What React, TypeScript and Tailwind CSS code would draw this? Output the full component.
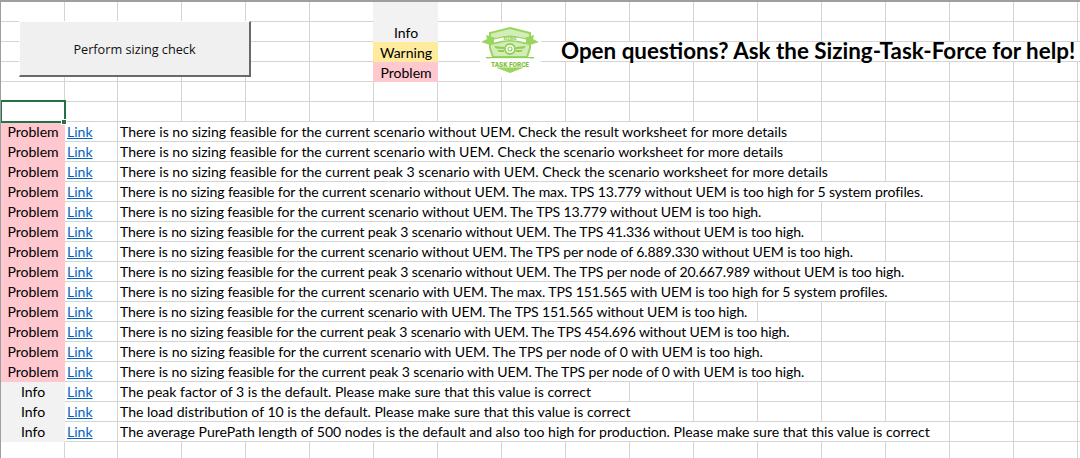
const COLUMNS = 'grid grid-cols-[64px_53px_repeat(16,64px)] grid-rows-[20px]';
const TOTAL_COLUMNS = 18;

interface Message {
  level: 'Problem' | 'Info';
  text: string;
  span: string;
  width: number;
  fit?: string;
}

// fit: Lato runs a little wider than the sheet font on some sentences
const messages: Message[] = [
  { level: 'Problem', span: 'col-span-11', width: 11, text: 'There is no sizing feasible for the current scenario without UEM. Check the result worksheet for more details' },
  { level: 'Problem', span: 'col-span-11', width: 11, text: 'There is no sizing feasible for the current scenario with UEM. Check the scenario worksheet for more details' },
  { level: 'Problem', span: 'col-span-12', width: 12, text: 'There is no sizing feasible for the current peak 3 scenario with UEM. Check the scenario worksheet for more details' },
  { level: 'Problem', span: 'col-span-13', width: 13, fit: 'tracking-[-0.09px]', text: 'There is no sizing feasible for the current scenario without UEM. The max. TPS 13.779 without UEM is too high for 5 system profiles.' },
  { level: 'Problem', span: 'col-span-11', width: 11, fit: 'tracking-[-0.12px]', text: 'There is no sizing feasible for the current scenario without UEM. The TPS 13.779 without UEM is too high.' },
  { level: 'Problem', span: 'col-span-11', width: 11, fit: 'tracking-[-0.13px]', text: 'There is no sizing feasible for the current peak 3 scenario without UEM. The TPS 41.336 without UEM is too high.' },
  { level: 'Problem', span: 'col-span-12', width: 12, fit: 'tracking-[-0.125px]', text: 'There is no sizing feasible for the current scenario without UEM. The TPS per node of 6.889.330 without UEM is too high.' },
  { level: 'Problem', span: 'col-span-13', width: 13, fit: 'tracking-[-0.13px]', text: 'There is no sizing feasible for the current peak 3 scenario without UEM. The TPS per node of 20.667.989 without UEM is too high.' },
  { level: 'Problem', span: 'col-span-13', width: 13, fit: 'tracking-[-0.11px]', text: 'There is no sizing feasible for the current scenario with UEM. The max. TPS 151.565 with UEM is too high for 5 system profiles.' },
  { level: 'Problem', span: 'col-span-10', width: 10, fit: 'tracking-[-0.135px]', text: 'There is no sizing feasible for the current scenario with UEM. The TPS 151.565 without UEM is too high.' },
  { level: 'Problem', span: 'col-span-11', width: 11, fit: 'tracking-[-0.15px]', text: 'There is no sizing feasible for the current peak 3 scenario with UEM. The TPS 454.696 without UEM is too high.' },
  { level: 'Problem', span: 'col-span-11', width: 11, fit: 'tracking-[-0.075px]', text: 'There is no sizing feasible for the current scenario with UEM. The TPS per node of 0 with UEM is too high.' },
  { level: 'Problem', span: 'col-span-11', width: 11, fit: 'tracking-[-0.1px]', text: 'There is no sizing feasible for the current peak 3 scenario with UEM. The TPS per node of 0 with UEM is too high.' },
  { level: 'Info', span: 'col-span-8', width: 8, text: 'The peak factor of 3 is the default. Please make sure that this value is correct' },
  { level: 'Info', span: 'col-span-9', width: 9, text: 'The load distribution of 10 is the default. Please make sure that this value is correct' },
  { level: 'Info', span: 'col-span-13', width: 13, text: 'The average PurePath length of 500 nodes is the default and also too high for production. Please make sure that this value is correct' },
];

const CELL = 'border-r border-b border-[#d4d4d4] min-w-0';

function EmptyCells({ count }: { count: number }) {
  return (
    <>
      {Array.from({ length: count }).map((_, i) => (
        <div key={i} className={CELL} />
      ))}
    </>
  );
}

function BlankRow() {
  return (
    <div className={`${COLUMNS} h-5`}>
      <EmptyCells count={TOTAL_COLUMNS} />
    </div>
  );
}

function LegendRow({ label, fill, edge, children }: { label: string; fill: string; edge: string; children?: React.ReactNode }) {
  return (
    <div className={`${COLUMNS} h-5`}>
      <EmptyCells count={5} />
      <div className={`border-b border-[#d4d4d4] border-r ${edge}`} />
      <div className={`flex items-center justify-center pt-[2px] ${fill}`}>{label}</div>
      {children}
    </div>
  );
}

function MessageRow({ message }: { message: Message }) {
  const fill = message.level === 'Problem' ? 'bg-[#ffc7ce]' : 'bg-[#f2f2f2]';
  return (
    <div className={`${COLUMNS} h-5`}>
      <div className={`flex items-center justify-center pt-px ${fill}`}>{message.level}</div>
      <div className={`${CELL} flex items-center pl-[2px] pt-px`}>
        <a href="#" className="text-[#0563c1] underline">Link</a>
      </div>
      <div className={`${CELL} ${message.span} ${message.fit ?? ''} flex items-center whitespace-nowrap pl-[2px] pt-px`}>{message.text}</div>
      <EmptyCells count={TOTAL_COLUMNS - 2 - message.width} />
    </div>
  );
}

function SizingLogo() {
  return (
    <svg viewBox="0 0 61 54" className="absolute left-[479px] top-[21px] h-[54px] w-[61px] bg-white">
      {/* shield */}
      <path d="M30 5 L50 10 L50 25 L47 34 L13 34 L10 25 L10 10 Z" fill="#d3edb8" stroke="#9bd45f" strokeWidth="2" />
      <path d="M17 45 L30 50 L43 45 L43 43 L17 43 Z" fill="#9bd45f" />
      {/* ribbon */}
      <path d="M1 19 L7 16 L6 12 L16 15 Q30 10 44 15 L54 12 L53 16 L59 19 L50 22 L44 21 Q30 16 16 21 L10 22 Z" fill="#9bd45f" />
      <path d="M14 16.5 Q30 11.5 46 16.5 L46 19.5 Q30 14.5 14 19.5 Z" fill="#ffffff" />
      <text x="30" y="17" textAnchor="middle" fontSize="4" fontWeight="700" fill="#7fc241" fontFamily="Roboto, sans-serif">SIZING</text>
      {/* wings and badge */}
      <path d="M14 23 L24 24 L24 26 L16 25.5 Z M17 27 L24 27 L24 29 L19 29 Z M46 23 L36 24 L36 26 L44 25.5 Z M43 27 L36 27 L36 29 L41 29 Z" fill="#8fce50" />
      <circle cx="30" cy="26" r="5" fill="#ffffff" stroke="#8fce50" strokeWidth="1.8" />
      <circle cx="30" cy="26" r="2" fill="none" stroke="#8fce50" strokeWidth="1.1" />
      <rect x="6" y="34" width="48" height="1.4" fill="#8fce50" />
      <rect x="10" y="35.4" width="40" height="9" fill="#ffffff" />
      <text x="11" y="43.5" textLength="38" lengthAdjust="spacingAndGlyphs" fontSize="8" fontWeight="900" fill="#7fc241" fontFamily="Roboto, sans-serif">TASK FORCE</text>
    </svg>
  );
}

export default function App() {
  return (
    <div className="relative h-[458px] w-[1080px] overflow-hidden border-l border-t-2 border-[#9e9e9e] bg-white font-['Lato',sans-serif] text-[14.05px] leading-none text-black">
      {/* sheet grid */}
      <div className={`${COLUMNS} h-5`}>
        <EmptyCells count={5} />
        <div className="border-b border-r border-[#d4d4d4] border-r-[#f2f2f2]" />
        <div className="bg-[#f2f2f2] border-b border-r border-[#f2f2f2]" />
        <EmptyCells count={11} />
      </div>
      <LegendRow label="Info" fill="bg-[#f2f2f2]" edge="border-r-[#f2f2f2]">
        <EmptyCells count={11} />
      </LegendRow>
      <LegendRow label="Warning" fill="bg-[#ffeb9c]" edge="border-r-[#ffeb9c]">
        <div className={CELL} />
        <div className={`${CELL} col-span-10 flex items-center whitespace-nowrap pl-[59px] text-[22.4px] font-bold`}>
          Open questions? Ask the Sizing-Task-Force for help!
        </div>
      </LegendRow>
      <LegendRow label="Problem" fill="bg-[#ffc7ce]" edge="border-r-[#ffc7ce]">
        <EmptyCells count={11} />
      </LegendRow>
      <BlankRow />
      <BlankRow />
      {messages.map((message, i) => (
        <MessageRow key={i} message={message} />
      ))}
      <BlankRow />

      {/* header green marker over column A */}
      <div className="absolute -left-px -top-[2px] h-[2px] w-[65px] bg-[#217346]" />

      {/* active cell */}
      <div className="absolute -left-px top-[98px] h-[23px] w-[66px] border-2 border-[#217346]">
        <div className="absolute -bottom-[4px] -right-[3px] h-[6px] w-[6px] border border-white bg-[#217346]" />
      </div>

      <button className="absolute left-[18px] top-[19px] flex h-[56px] w-[232px] items-center justify-center border-l border-t border-b-2 border-r-2 border-l-white border-t-white border-b-[#696969] border-r-[#696969] bg-[#f0f0f0] pt-[2px] font-['Open_Sans',sans-serif] text-[12.7px] text-[#111]">
        Perform sizing check
      </button>

      <SizingLogo />
    </div>
  );
}
